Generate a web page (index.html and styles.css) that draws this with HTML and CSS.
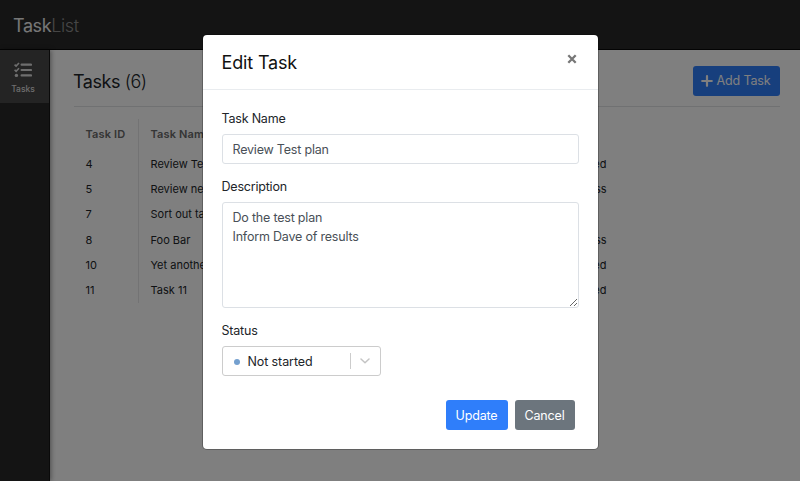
FILE: index.html
```html
<!DOCTYPE html>
<html lang="en">
<head>
<meta charset="utf-8">
<title>TaskList</title>
<link rel="stylesheet" href="styles.css">
</head>
<body>
<div class="app">
  <header class="topbar"><div class="brand"><span class="brand-strong">Task</span><span class="brand-light">List</span></div></header>
  <div class="body">
    <nav class="sidebar">
      <a class="nav-item">
        <svg class="nav-icon" viewBox="0 0 18 16" fill="none" stroke="currentColor">
          <path d="M.6 2.600l1.500 1.500L5 1M.6 7.800l1.500 1.500L5 6.200" stroke-width="1.600"/>
          <path d="M7.600 2.700H17M7.600 8H17M7.600 13.400H17" stroke-width="2.200" stroke-linecap="round"/>
          <circle cx="2.400" cy="13.400" r="1.700" fill="currentColor" stroke="none"/>
        </svg>
        <span class="nav-label">Tasks</span>
      </a>
    </nav>
    <main class="content">
      <div class="page-head">
        <h1 class="page-title">Tasks <span class="count">(6)</span></h1>
        <button class="btn btn-primary btn-add"><svg class="plus" viewBox="0 0 12 12"><path d="M6 1.200V10.800M1.200 6H10.800" stroke="currentColor" stroke-width="2.200" stroke-linecap="round"/></svg><span>Add Task</span></button>
      </div>
      <div class="table">
        <div class="row head"><span>Task ID</span><span>Task Name</span><span>Status</span></div>
        <div class="row"><span>4</span><span>Review Test plan</span><span>Not started</span></div>
        <div class="row"><span>5</span><span>Review new</span><span>In progress</span></div>
        <div class="row"><span>7</span><span>Sort out tasks</span><span>Done</span></div>
        <div class="row"><span>8</span><span>Foo Bar</span><span>In progress</span></div>
        <div class="row"><span>10</span><span>Yet another</span><span>Not started</span></div>
        <div class="row"><span>11</span><span>Task 11</span><span>Not started</span></div>
      </div>
    </main>
  </div>
</div>
<div class="backdrop">
  <section class="modal">
    <header class="modal-head">
      <h2 class="modal-title">Edit Task</h2>
      <svg class="close" viewBox="0 0 10 10"><path d="M1.300 1.300L8.700 8.700M8.700 1.300L1.300 8.700" stroke="currentColor" stroke-width="2.300"/></svg>
    </header>
    <div class="modal-body">
      <label class="label">Task Name</label>
      <input class="field" type="text" value="Review Test plan">
      <label class="label">Description</label>
      <textarea class="field area">Do the test plan
Inform Dave of results</textarea>
      <label class="label">Status</label>
      <div class="select">
        <i class="dot"></i><span class="select-value">Not started</span>
        <i class="divider"></i>
        <svg class="chevron" viewBox="0 0 10 6"><path d="M1 1l4 3.800L9 1" fill="none" stroke="currentColor" stroke-width="1.500" stroke-linecap="round" stroke-linejoin="round"/></svg>
      </div>
      <div class="actions">
        <button class="btn btn-primary btn-update">Update</button>
        <button class="btn btn-secondary">Cancel</button>
      </div>
    </div>
  </section>
</div>
</body>
</html>
```

FILE: styles.css
```css
* { box-sizing: border-box; }
body { margin: 0; font-family: Inter, sans-serif; font-size: 12.500px; letter-spacing: -.2px; color: #212529; overflow: hidden; }
h1, h2 { margin: 0; font-weight: 400; }
.app { height: 481px; display: flex; flex-direction: column; background: #fff; }
.topbar { height: 50px; flex: none; background: #282828; border-bottom: 1px solid #080808; padding: 15px 13px 0; }
.brand { font-size: 18px; line-height: 21px; letter-spacing: -.4px; }
.brand-strong { color: #eee; }
.brand-light { color: #8c8c8c; font-weight: 300; }
.body { flex: 1; display: flex; }
.sidebar { width: 50px; background: #282828; border-right: 1px solid #141414; box-shadow: 1px 0 5px rgba(0,0,0,.4); }
.nav-item { height: 53px; background: #484848; color: #ddd; display: flex; flex-direction: column; align-items: center; padding: 12px 3px 0 0; }
.nav-icon { width: 18px; height: 16px; }
.nav-label { margin-top: 6px; font-size: 8.500px; font-weight: 500; line-height: 11px; letter-spacing: 0; }
.content { flex: 1; padding: 0 20px 0 23px; }
.page-head { height: 57px; display: flex; align-items: center; justify-content: space-between; border-bottom: 1px solid #e0e2e4; padding-top: 6px; margin-left: 1px; }
.page-title { font-size: 18px; letter-spacing: -.45px; margin-left: -1px; }
.count { font-weight: 300; }
.btn { font: 400 12.500px/20px Inter, sans-serif; letter-spacing: -.15px; height: 30px; border: 0; border-radius: 3px; color: #fff; padding: 1px 0 0; }
.btn-primary { background: #2f7efa; }
.btn-secondary { background: #6c757d; width: 60px; }
.btn-update { width: 62px; }
.btn-add { width: 87px; display: flex; align-items: center; justify-content: center; gap: 4px; margin-bottom: 1px; padding-right: 2px; }
.plus { width: 12px; height: 12px; }
.table { margin: 12px 0 0 1px; padding-top: 3px; background: linear-gradient(#e6e7e9, #e6e7e9) 64px 0 / 1px 100% no-repeat; letter-spacing: 0; }
.row { display: grid; grid-template-columns: 65px 375px 120px; height: 25.400px; line-height: 26px; font-size: 11px; padding-left: 11.500px; }
.row.head { height: 28.500px; line-height: 25px; color: #6a6a6a; font-weight: 600; letter-spacing: .15px; }
.row span:last-child { text-align: right; width: 81px; }
.row.head span:last-child, .row:nth-child(4) span:last-child { text-align: left; }
.backdrop { position: absolute; inset: 0; background: rgba(0,0,0,.5); display: flex; justify-content: center; align-items: flex-start; padding-top: 35px; }
.modal { width: 395px; height: 414px; background: #fff; border-radius: 4px; box-shadow: 0 0 0 1px rgba(0,0,0,.25); }
.modal-head { height: 55px; border-bottom: 1px solid #e9ecef; display: flex; align-items: center; justify-content: space-between; padding: 0 21px 0 19px; }
.modal-title { font-size: 18px; letter-spacing: -.15px; color: #111; }
.close { width: 10px; height: 10px; color: #777; margin-bottom: 7px; }
.modal-body { padding: 18px 19px 0 19px; }
.label { display: block; height: 26px; line-height: 22px; }
.field { display: block; width: 357px; height: 30px; margin: 0 0 12px; padding: 0 10px; border: 1px solid #dce0e5; border-radius: 3px; background: #fff; color: #495057; font: 12.500px/19px Inter, sans-serif; letter-spacing: -.2px; outline: 0; }
.area { height: 106px; padding-top: 5px; margin-bottom: 12px; }
.select { width: 159px; height: 30px; border: 1px solid #ccc; border-radius: 3px; display: flex; align-items: center; padding: 0 10px 0 11px; }
.dot { width: 6px; height: 6px; border-radius: 50%; background: #74a0cf; margin: 2px 8px 0 0; }
.select-value { flex: 1; letter-spacing: -.1px; }
.divider { width: 1px; height: 16px; background: #ccc; margin-right: 9px; }
.chevron { width: 10px; height: 6px; color: #c4c4c4; }
.actions { display: flex; justify-content: flex-end; gap: 7px; padding-right: 4px; margin-top: 24px; }
```
